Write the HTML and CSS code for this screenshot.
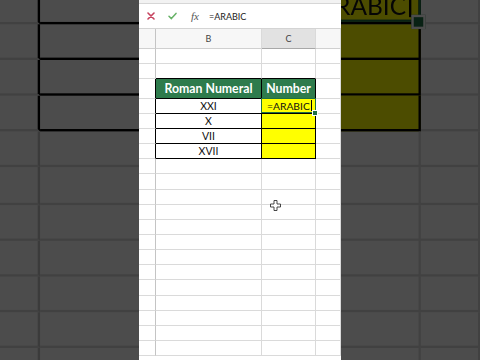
FILE: index.html
```html
<!DOCTYPE html>
<html lang="en">
<head>
    <meta charset="UTF-8">
    <meta name="viewport" content="width=device-width, initial-scale=1.0">
    <title>ARABIC function</title>
    <link rel="stylesheet" href="styles.css">
</head>
<body>
    <!-- Zoomed, darkened copy of the sheet behind the phone frame (filled in by the script) -->
    <div class="backdrop" aria-hidden="true"></div>

    <main class="phone">
        <div class="sheet">
            <div class="ribbon-edge"></div>

            <div class="formula-bar">
                <svg class="fb-icon" width="8" height="8" viewBox="0 0 8 8">
                    <path d="M1 1 L7 7 M7 1 L1 7" stroke="#c7435f" stroke-width="1.6" stroke-linecap="round"/>
                </svg>
                <svg class="fb-icon" width="9" height="8" viewBox="0 0 9 8">
                    <path d="M1 4.2 L3.4 6.6 L8 1.4" fill="none" stroke="#67b267" stroke-width="1.5" stroke-linecap="round" stroke-linejoin="round"/>
                </svg>
                <span class="fx">fx</span>
                <span class="formula">=ARABIC</span>
            </div>

            <div class="row col-heads">
                <div class="rh"></div>
                <div class="b">B</div>
                <div class="c selected">C</div>
                <div class="d"></div>
            </div>

            <div class="grid">
                <div class="row"><div class="rh"></div><div class="b"></div><div class="c"></div><div class="d"></div></div>
                <div class="row above-table"><div class="rh"></div><div class="b"></div><div class="c"></div><div class="d"></div></div>

                <div class="row table-head in-table">
                    <div class="rh"></div>
                    <div class="b">Roman Numeral</div>
                    <div class="c">Number</div>
                    <div class="d"></div>
                </div>
                <div class="row in-table">
                    <div class="rh"></div>
                    <div class="b">XXI</div>
                    <div class="c num active">=ARABIC<span class="caret"></span></div>
                    <div class="d"></div>
                </div>
                <div class="row in-table">
                    <div class="rh"></div>
                    <div class="b">X</div>
                    <div class="c num"></div>
                    <div class="d"></div>
                </div>
                <div class="row in-table">
                    <div class="rh"></div>
                    <div class="b">VII</div>
                    <div class="c num"></div>
                    <div class="d"></div>
                </div>
                <div class="row in-table">
                    <div class="rh"></div>
                    <div class="b">XVII</div>
                    <div class="c num"></div>
                    <div class="d"></div>
                </div>
            </div>
        </div>

        <!-- mouse pointer over the sheet -->
        <svg class="pointer" width="11" height="11" viewBox="0 0 11 11">
            <path d="M4 0.5 H7 V4 H10.5 V7 H7 V10.5 H4 V7 H0.5 V4 H4 Z" fill="#fff" stroke="#333" stroke-width="0.9"/>
        </svg>
    </main>

    <script>
        // empty rows under the table
        const grid = document.querySelector('.phone .grid');
        for (let i = 0; i < 13; i++) {
            const row = document.createElement('div');
            row.className = 'row';
            row.innerHTML = '<div class="rh"></div><div class="b"></div><div class="c"></div><div class="d"></div>';
            grid.appendChild(row);
        }

        // thumbnail background: same sheet, scaled up and darkened
        const copy = document.querySelector('.phone .sheet').cloneNode(true);
        document.querySelector('.backdrop').appendChild(copy);
    </script>
</body>
</html>
```

FILE: styles.css
```css
body {
    margin: 0;
    width: 480px;
    height: 360px;
    overflow: hidden;
    position: relative;
    display: flex;
    justify-content: center;
    background-color: #4a4a4a;
    font-family: Lato, "Open Sans", sans-serif;
}

.backdrop {
    position: absolute;
    inset: 0;
    overflow: hidden;
}

.backdrop .sheet {
    width: 202px;
    margin: 0 auto;
    transform: scale(2.38);
    transform-origin: 101px 179px;
    filter: brightness(0.3) blur(0.3px);
}

.phone {
    position: relative;
    width: 202px;
    height: 360px;
    background-color: #fff;
    overflow: hidden;
}

.sheet {
    background-color: #fff;
}

.ribbon-edge {
    height: 3px;
    background-color: #f2f2f2;
    border-bottom: 1px solid #d6d6d6;
}

/* formula bar */
.formula-bar {
    height: 24px;
    display: flex;
    align-items: center;
    padding-left: 8px;
    border-bottom: 1px solid #d4d4d4;
}

.fb-icon + .fb-icon {
    margin-left: 13px;
}

.fx {
    margin-left: 14px;
    font-family: "Liberation Serif", serif;
    font-style: italic;
    font-size: 11px;
    color: #555;
}

.formula {
    margin-left: 10px;
    font-size: 9px;
    color: #222;
}

/* grid */
.row {
    display: flex;
    height: 15.15px;
}

.row > div {
    box-sizing: border-box;
    border-right: 1px solid #dadada;
    border-bottom: 1px solid #dadada;
    display: flex;
    align-items: center;
    justify-content: center;
    font-size: 10.5px;
    color: #111;
}

.row .rh {
    width: 17px;
    border-right-color: #c4c4c4;
}

.row .b {
    width: 106px;
}

.row .c {
    width: 54px;
}

.row .d {
    flex: 1;
}

.col-heads {
    height: 20px;
    background-color: #f7f7f7;
}

.col-heads > div {
    font-size: 9px;
    color: #444;
    border-bottom-color: #d0d0d0;
}

.col-heads .selected {
    background-color: #e2e2e2;
    border-bottom: 1px solid #a8a8a8;
}

/* the table */
.above-table .b,
.above-table .c {
    border-bottom-color: #000;
}

.in-table .rh,
.in-table .b,
.in-table .c {
    border-right-color: #000;
}

.in-table .b,
.in-table .c {
    border-bottom-color: #000;
}

.table-head {
    height: 19.5px;
}

.table-head .b,
.table-head .c {
    background-color: #2e7b4c;
    color: #fff;
    font-weight: bold;
    font-size: 12.3px;
}

.num {
    background-color: #ffff00;
}

.active {
    position: relative;
    justify-content: flex-start !important;
    padding-left: 5px;
    font-size: 10.3px !important;
}

.active::before {
    content: '';
    position: absolute;
    inset: -1px -1px 0 -1px;
    border: 1.5px solid #1f6f43;
}

.active::after {
    content: '';
    position: absolute;
    right: -3px;
    bottom: -3px;
    width: 4px;
    height: 4px;
    background-color: #1f6f43;
    border: 1px solid #fff;
}

.caret {
    width: 1px;
    height: 11px;
    margin-left: 1px;
    background-color: #000;
}

.pointer {
    position: absolute;
    left: 131px;
    top: 200px;
}
```
